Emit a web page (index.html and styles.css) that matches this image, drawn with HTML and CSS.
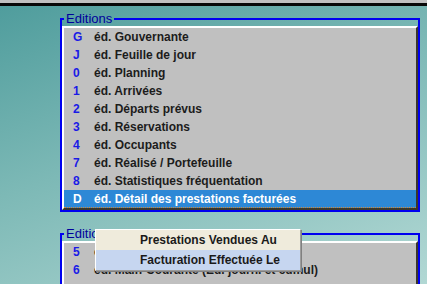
FILE: index.html
```html
<!DOCTYPE html>
<html lang="fr">

<head>
    <meta charset="UTF-8">
    <meta name="viewport" content="width=device-width, initial-scale=1.0">
    <link rel="stylesheet" href="styles.css">
    <title>Editions</title>
</head>

<body>
    <div class="topbar"></div>

    <fieldset class="panel">
        <legend>Editions</legend>
        <ul class="list">
            <li class="row"><span class="key">G</span>éd. Gouvernante</li>
            <li class="row"><span class="key">J</span>éd. Feuille de jour</li>
            <li class="row"><span class="key">0</span>éd. Planning</li>
            <li class="row"><span class="key">1</span>éd. Arrivées</li>
            <li class="row"><span class="key">2</span>éd. Départs prévus</li>
            <li class="row"><span class="key">3</span>éd. Réservations</li>
            <li class="row"><span class="key">4</span>éd. Occupants</li>
            <li class="row"><span class="key">7</span>éd. Réalisé / Portefeuille</li>
            <li class="row"><span class="key">8</span>éd. Statistiques fréquentation</li>
            <li class="row selected"><span class="key">D</span>éd. Détail des prestations facturées</li>
        </ul>
    </fieldset>

    <fieldset class="panel second">
        <legend>Editions</legend>
        <ul class="list">
            <li class="row"><span class="key">5</span>éd. Chiffre d'affaires</li>
            <li class="row"><span class="key">6</span>éd. Main-Courante (Ed. journ. et cumul)</li>
        </ul>
    </fieldset>

    <div class="popup">
        <div class="popup-item">Prestations Vendues Au</div>
        <div class="popup-item hover">Facturation Effectuée Le</div>
    </div>
</body>

</html>
```

FILE: styles.css
```css
* {
    box-sizing: border-box;
    margin: 0;
    padding: 0;
    font-family: "Liberation Sans", Arial, sans-serif;
}

body {
    width: 427px;
    height: 284px;
    overflow: hidden;
    position: relative;
    background: linear-gradient(160deg, #4e9c9c 0%, #7db9b6 45%, #b2d8d4 100%);
}

.topbar {
    height: 6px;
    background-color: #c0c0c0;
    border-bottom: 3px solid #080808;
}

.panel {
    width: 360px;
    margin: 5px 0 0 60px;
    border: 2px solid #0000f0;
}

.panel legend {
    font-size: 13px;
    color: #00009c;
    padding: 0 2px;
    margin-left: 2px;
    line-height: 15px;
}

.second {
    margin-top: 14px;
}

.second .list {
    height: 80px;
}

.list {
    list-style: none;
    background-color: #c0c0c0;
    border-top: 2px solid #fff;
    border-left: 2px solid #fff;
    border-right: 2px solid #3a372c;
    border-bottom: 2px solid #3a372c;
}

.row {
    display: flex;
    align-items: center;
    height: 18px;
    font-size: 12px;
    font-weight: bold;
    color: #1c1c1c;
    white-space: nowrap;
}

.key {
    width: 30px;
    padding-left: 9px;
    color: #1a1ae6;
}

.selected {
    background-color: #2d88d6;
    color: #fff;
    border-bottom: 1px dotted #d08a3c;
}

.selected .key {
    color: #fff;
}

.popup {
    position: absolute;
    left: 95px;
    top: 229px;
    width: 206px;
    background-color: #f4f2ea;
    border: 1px solid #9c9c9c;
    border-left-color: #fff;
    border-top-color: #fff;
    box-shadow: 1px 1px 0 #808080;
}

.popup-item {
    height: 20px;
    line-height: 20px;
    padding-left: 44px;
    font-size: 12px;
    font-weight: bold;
    color: #1a1a1a;
    background-color: #efebdc;
}

.popup-item.hover {
    background-color: #c6d6f0;
}
```
